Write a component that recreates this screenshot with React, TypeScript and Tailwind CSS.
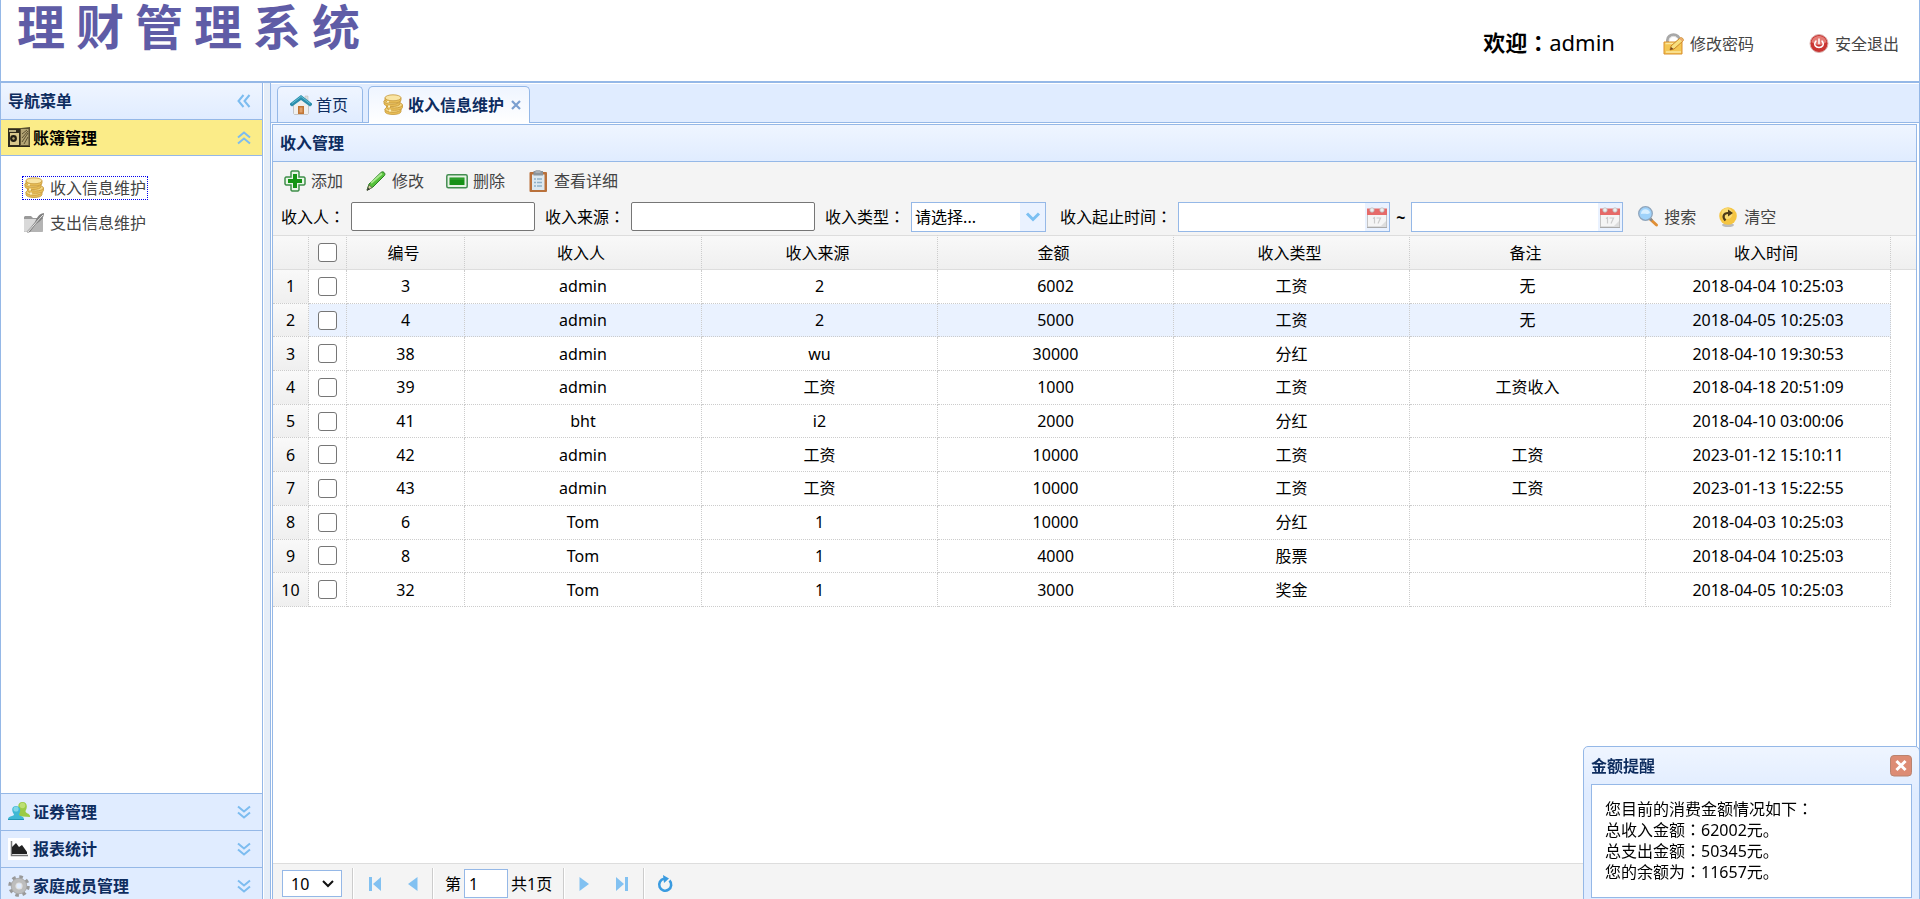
import { useState, type ReactNode } from 'react';

type Income = {
  id: number;
  person: string;
  source: string;
  amount: number;
  type: string;
  remark: string;
  time: string;
};

const incomes: Income[] = [
  { id: 3, person: 'admin', source: '2', amount: 6002, type: '工资', remark: '无', time: '2018-04-04 10:25:03' },
  { id: 4, person: 'admin', source: '2', amount: 5000, type: '工资', remark: '无', time: '2018-04-05 10:25:03' },
  { id: 38, person: 'admin', source: 'wu', amount: 30000, type: '分红', remark: '', time: '2018-04-10 19:30:53' },
  { id: 39, person: 'admin', source: '工资', amount: 1000, type: '工资', remark: '工资收入', time: '2018-04-18 20:51:09' },
  { id: 41, person: 'bht', source: 'i2', amount: 2000, type: '分红', remark: '', time: '2018-04-10 03:00:06' },
  { id: 42, person: 'admin', source: '工资', amount: 10000, type: '工资', remark: '工资', time: '2023-01-12 15:10:11' },
  { id: 43, person: 'admin', source: '工资', amount: 10000, type: '工资', remark: '工资', time: '2023-01-13 15:22:55' },
  { id: 6, person: 'Tom', source: '1', amount: 10000, type: '分红', remark: '', time: '2018-04-03 10:25:03' },
  { id: 8, person: 'Tom', source: '1', amount: 4000, type: '股票', remark: '', time: '2018-04-04 10:25:03' },
  { id: 32, person: 'Tom', source: '1', amount: 3000, type: '奖金', remark: '', time: '2018-04-05 10:25:03' },
];

const columns = ['编号', '收入人', '收入来源', '金额', '收入类型', '备注', '收入时间'];

function Icon({ children, className = '' }: { children: ReactNode; className?: string }) {
  return (
    <svg viewBox="0 0 22 22" className={`size-[22px] shrink-0 ${className}`} fill="none" aria-hidden="true">
      {children}
    </svg>
  );
}

const Coins = () => (
  <Icon>
    <g fill="#e9bf58" stroke="#c7983a" strokeWidth=".8">
      <path d="M3 15v2.500c0 4 16 4 16 0V15z" />
      <ellipse cx="11" cy="15.300" rx="8" ry="3" fill="#f3d683" />
      <path d="M4.500 11v2.300c0 4 16 4 16 0V11z" />
      <ellipse cx="12.500" cy="11" rx="8" ry="3" fill="#f3d683" />
      <path d="M2 7v2.500c0 4 16 4 16 0V7z" />
      <ellipse cx="10" cy="7.300" rx="8" ry="3" fill="#f3d683" />
      <path d="M3 3.800V6c0 4 16 4 16 0V3.800z" />
      <ellipse cx="11" cy="3.800" rx="8" ry="3" fill="#f9e5a4" />
    </g>
    <path d="M6 7v1.500M8 15.500v2M7 11.500v2" stroke="#fbf0c0" strokeWidth="2" />
  </Icon>
);

const Folder = () => (
  <Icon>
    <path d="M2 4h6l2 2h10v13l-1 1H2l-1-1V5z" fill="#9a9a9a" />
    <path d="M1 7h19v12l-1 1H2l-1-1z" fill="#b4b4b4" />
    <path d="M1 7h14L3 20l-2-1z" fill="#d9d9d9" />
    <path d="M21 1c-6 1-7 5-9 9l-8 11 3-1 6-8c3-2 8-5 8-11z" fill="#808080" />
    <path d="M20 3c-5 5-9 10-15 17" stroke="#e8e8e8" strokeWidth="1" />
  </Icon>
);

const House = () => (
  <Icon>
    <path d="M15 2h3v6h-3z" fill="#ddd" stroke="#bbb" strokeWidth=".5" />
    <path d="M3.500 10 11 4l7.500 6v9.500l-1 1h-13l-1-1z" fill="#f0efed" stroke="#bbb" strokeWidth=".8" />
    <path d="M8 12h6v8H8z" fill="#c07535" />
    <path d="M9.500 13.500h3v5h-3z" fill="#dfa069" />
    <path d="M0 9.500 11 1l11 8.500v1.500l-2 1.500-9-6.500-9 6.500L0 11z" fill="#2a8dac" />
    <path d="M2 9.500 11 2.500l9 7" stroke="#64bfd4" strokeWidth="1" />
  </Icon>
);

const Safe = () => (
  <Icon>
    <path d="M0 1h13l9-1v20H0z" fill="#5b5030" />
    <path d="M0 2h12v17H0z" fill="#2f2a1b" />
    <path d="M2 6h9v12H2z" fill="#d9c88b" />
    <circle cx="5.500" cy="11.500" r="3.400" fill="#211d12" />
    <circle cx="5.500" cy="11.500" r="1.200" fill="#b8a76d" />
    <path d="M1 4h7" stroke="#e9dca4" strokeWidth="1.500" />
    <path d="M13 2h7.500v16H13z" fill="#b3a474" />
    <path d="m14 7 5-4m-5 8 6-7m-6 11 6-9m-4 11 4-7" stroke="#5b5030" />
    <path d="M0 19.500h22" stroke="#2f2a1b" />
  </Icon>
);

const Users = () => (
  <Icon>
    <path d="M8 15c0-4 4-3 4-5-3-4-2-9 2.500-9S20 6 17.500 10c0 3 5 2 4.500 6z" fill="#9bcb45" />
    <circle cx="14.500" cy="4.500" r="2.800" fill="#bddf72" />
    <path d="M0 18.500c0-4 6-3 6-5C3 9 4 5 8 5s5.500 4 3 8.500c0 2 5 1 5 5z" fill="#3fb8d4" />
    <circle cx="8" cy="8" r="2.600" fill="#80d7e8" />
    <path d="M0 18.500h16" stroke="#2397b4" />
  </Icon>
);

const Chart = () => (
  <Icon>
    <path d="M0 0h22v22H0z" fill="#fff" />
    <path d="M3.500 3v14.500H20" stroke="#777" strokeWidth="1.500" />
    <path d="M4 16V9l4-4 3 4 3-2 5 7v2z" fill="#222" />
  </Icon>
);

const Gear = () => (
  <Icon>
    <circle cx="11" cy="11" r="9" stroke="#999" strokeWidth="3.500" strokeDasharray="3.500 3.570" />
    <circle cx="11" cy="11" r="5.500" stroke="#bdbdbd" strokeWidth="5" />
    <circle cx="11" cy="11" r="7.800" stroke="#a2a2a2" strokeWidth=".7" />
    <circle cx="11" cy="11" r="3" stroke="#e3e3e3" strokeWidth="1.200" />
  </Icon>
);

const Lock = () => (
  <Icon>
    <path d="M4.500 11V7c0-7 12-7 12 0v3" stroke="#a8a8a8" strokeWidth="3" />
    <path d="M6 8c0-5 6-6 8-3" stroke="#ddd" />
    <path d="M1 9h18v12H1z" fill="#f3c653" stroke="#d98f2c" />
    <path d="M2.500 10.500h15M3 19h15" stroke="#fbe7a0" strokeWidth="1.500" />
    <path d="m7 17 1-4 9-8c2-1 4 1 3 3l-9 8z" fill="#f7df7f" stroke="#ca8422" />
    <path d="m7 17 1-3 2.500 2z" fill="#74451c" />
    <path d="m17 5 3 3" stroke="#eaa96b" strokeWidth="2" />
  </Icon>
);

const Power = () => (
  <Icon>
    <circle cx="11" cy="10.500" r="9" fill="#c93532" stroke="#d9b3b1" />
    <path d="M3.500 9C5 1 17 1 18.500 9c-5 4-10 4-15 0z" fill="#e47a74" />
    <path d="M8 8c-3 4 0 6.500 3 6.500S17 12 14 8M11 6v4.500" stroke="#fff" strokeWidth="1.500" strokeLinecap="round" />
  </Icon>
);

const Plus = () => (
  <Icon>
    <path d="M8 1h6l1 1v5h5l1 1v6l-1 1h-5v5l-1 1H8l-1-1v-5H2l-1-1V8l1-1h5V2z" fill="#eaf6e8" stroke="#3f8f4a" strokeWidth="1.500" />
    <path d="M9 4h4v5h5v4h-5v5H9v-5H4V9h5z" fill="#149414" />
  </Icon>
);

const Pencil = () => (
  <Icon>
    <path d="m2 20 2-6L16 2.500c2-2 5 1 3.500 3L8 17z" fill="#55c13a" stroke="#2c7d25" />
    <path d="M6 13 17 3.500" stroke="#a9e78f" strokeWidth="2" />
    <path d="m2 20.500 2-5.500 3 2.500z" fill="#d9d2a8" stroke="#5c6b45" strokeWidth=".8" />
    <path d="m2 20.500 1-3 2 2z" fill="#333" />
  </Icon>
);

const Minus = () => (
  <Icon>
    <rect x=".8" y="4.800" width="20.400" height="13" rx="1.500" fill="#e6f2e4" stroke="#438d50" strokeWidth="1.500" />
    <path d="M3.500 7.500h15v7.500h-15z" fill="#169116" />
    <path d="M4 8h14v2H4z" fill="#2a9d2a" />
  </Icon>
);

const Clipboard = () => (
  <Icon>
    <rect x="2.500" y="2" width="17.500" height="20" rx="1" fill="#b9713b" />
    <path d="M5 4.500h12.500V20H5z" fill="#dce9f1" />
    <path d="M6.500 1H16v4.500H6.500z" fill="#8b949b" />
    <path d="M8.500 0h5v3h-5z" fill="#aab1b6" />
    <path d="M7 9h2m1 0h5m-8 3.500h2m1 0h5m-8 3.500h2m1 0h5" stroke="#8fb1c8" strokeWidth="1.300" />
  </Icon>
);

const Magnifier = () => (
  <Icon>
    <path d="m13 13 6.500 6" stroke="#e08f35" strokeWidth="3" strokeLinecap="round" />
    <path d="m13 12.500 2 2" stroke="#888" strokeWidth="2.500" />
    <circle cx="8.500" cy="7.500" r="6.800" fill="#9fd2fa" stroke="#8ea4bb" strokeWidth="1.300" />
    <path d="M4 8c0-6 8-6 9-1-3 2-5 0-9 1z" fill="#d8efff" />
  </Icon>
);

const Undo = () => (
  <Icon>
    <ellipse cx="11" cy="19" rx="6" ry="2" fill="#bbb" />
    <circle cx="11" cy="10" r="8.800" fill="#f5c542" />
    <circle cx="10" cy="7.500" r="5.500" fill="#fadb73" />
    <path d="M8.500 14.500c-3.500-3.500-2-7.500 2.500-7.500h1" stroke="#4d3a18" strokeWidth="2.200" />
    <path d="m11 3.500 5 3.500-5 3.500z" fill="#4d3a18" />
  </Icon>
);

const Calendar = () => (
  <Icon>
    <rect x="1.500" y="3.500" width="19" height="17.500" fill="#f5f5f5" stroke="#c4c4c4" />
    <path d="M1 2.500h20V9H1z" fill="#e66a68" />
    <circle cx="6" cy="4" r="2.200" fill="#eee" stroke="#bbb" strokeWidth=".8" />
    <circle cx="16" cy="4" r="2.200" fill="#eee" stroke="#bbb" strokeWidth=".8" />
    <path d="M7 12.500 8.500 11.500V17.500M10.500 12h4l-2.500 5.500" stroke="#cbcbcb" strokeWidth="1.200" />
    <path d="m15 20 5-5v5z" fill="#ddd" />
    <path d="M1 21.500h20" stroke="#aaa" />
  </Icon>
);

function Chevrons({ className = '' }: { className?: string }) {
  return (
    <svg viewBox="0 0 14 14" className={`size-[14px] shrink-0 ${className}`} fill="none" aria-hidden="true">
      <path d="m1 1.500 6 5 6-5M1 7.500l6 5 6-5" stroke="#7cbcf0" strokeWidth="2" />
    </svg>
  );
}

// The Traditional face keeps the full-width colon in the middle of its box.
const Colon = () => <span className="font-['Noto_Sans_CJK_TC',sans-serif] leading-none">：</span>;

function AccordionHead({ icon, title }: { icon: ReactNode; title: string }) {
  return (
    <button
      type="button"
      className="flex h-[37px] shrink-0 items-center gap-[3px] border-t border-[#95b8e7] bg-[#e0ecff] pr-[11px] pl-[7px] font-bold text-[#0e2d5f]"
    >
      {icon}
      {title}
      <Chevrons className="ml-auto" />
    </button>
  );
}

function ToolButton({ icon, children }: { icon: ReactNode; children: ReactNode }) {
  return (
    <button type="button" className="flex shrink-0 items-center gap-[5px] whitespace-nowrap text-[#444]">
      {icon}
      {children}
    </button>
  );
}

function DateBox({ id, label }: { id: string; label: string }) {
  return (
    <div className="flex h-[30px] w-[212px] items-center border border-[#95b8e7] bg-white">
      <input id={id} aria-label={label} className="h-full min-w-0 flex-1 px-1 outline-none" />
      <button type="button" aria-label="选择日期" className="flex h-full w-6 items-center justify-center bg-[#eaf2ff]">
        <Calendar />
      </button>
    </div>
  );
}

function Sidebar() {
  return (
    <nav className="flex h-[calc(100%+5px)] w-[262px] shrink-0 flex-col border-r border-[#95b8e7] bg-white">
      <div className="flex h-[37px] shrink-0 items-center justify-between border-b border-[#95b8e7] bg-linear-to-b from-[#eff5ff] to-[#e0ecff] pr-[11px] pl-[7px] font-bold text-[#0e2d5f]">
        导航菜单
        <button type="button" aria-label="收起菜单">
          <Chevrons className="rotate-90" />
        </button>
      </div>
      <button
        type="button"
        className="flex h-9 shrink-0 items-center gap-[3px] border-b border-[#95b8e7] bg-[#fbec88] pr-[11px] pl-[7px] font-bold"
      >
        <Safe />
        账簿管理
        <Chevrons className="ml-auto rotate-180" />
      </button>
      <ul className="flex flex-1 flex-col items-start gap-[11px] px-[21px] py-5 text-[#444]">
        <li>
          <a href="#income" className="flex h-6 items-center gap-[5px] border border-dotted border-[#0000ee] pr-px">
            <Coins />
            收入信息维护
          </a>
        </li>
        <li>
          <a href="#expense" className="flex h-6 items-center gap-[5px] border border-transparent">
            <Folder />
            支出信息维护
          </a>
        </li>
      </ul>
      <AccordionHead icon={<Users />} title="证券管理" />
      <AccordionHead icon={<Chart />} title="报表统计" />
      <AccordionHead icon={<Gear />} title="家庭成员管理" />
    </nav>
  );
}

function Filters() {
  return (
    <div className="flex h-[37px] items-center whitespace-nowrap pl-2">
      <label htmlFor="person">收入人<Colon /></label>
      <input id="person" className="mr-2.5 ml-1.5 h-[29px] w-[184px] rounded-xs border border-[#767676] bg-white px-1" />
      <label htmlFor="source">收入来源<Colon /></label>
      <input id="source" className="mr-2.5 ml-1.5 h-[29px] w-[184px] rounded-xs border border-[#767676] bg-white px-1" />
      <label htmlFor="type">收入类型<Colon /></label>
      <div className="relative mr-3.5 ml-1.5">
        <select id="type" className="h-[30px] w-[135px] appearance-none border border-[#95b8e7] bg-white pl-[3px]">
          <option>请选择...</option>
          <option>工资</option>
          <option>分红</option>
          <option>股票</option>
          <option>奖金</option>
        </select>
        <span className="pointer-events-none absolute inset-y-px right-px flex w-[25px] items-center justify-center bg-[#eaf2ff]">
          <svg viewBox="0 0 16 12" className="h-3 w-4" fill="none" aria-hidden="true">
            <path d="m2 2.500 6 6 6-6" stroke="#7cc0f2" strokeWidth="3" />
          </svg>
        </span>
      </div>
      <label htmlFor="start">收入起止时间<Colon /></label>
      <div className="ml-1.5 flex items-center gap-1.5">
        <DateBox id="start" label="开始时间" />
        <span className="font-bold">~</span>
        <DateBox id="end" label="结束时间" />
      </div>
      <div className="ml-3.5 flex gap-[21px]">
        <ToolButton icon={<Magnifier />}>搜索</ToolButton>
        <ToolButton icon={<Undo />}>清空</ToolButton>
      </div>
    </div>
  );
}

function IncomeTable() {
  const [checked, setChecked] = useState<number[]>([]);

  const toggle = (id: number) =>
    setChecked(checked.includes(id) ? checked.filter((c) => c !== id) : [...checked, id]);

  const boxClass =
    'block mx-auto size-[19px] appearance-none rounded-[3px] border border-[#767676] bg-white checked:bg-blue-600';

  return (
    <table className="h-[372px] w-full table-fixed border-separate border-spacing-0 text-center">
      <colgroup>
        <col className="w-9" />
        <col className="w-[38px]" />
        <col className="w-[118px]" />
        <col className="w-[237px]" />
        <col className="w-[236px]" />
        <col className="w-[236px]" />
        <col className="w-[236px]" />
        <col className="w-[236px]" />
        <col className="w-[245px]" />
        <col className="w-[25px]" />
      </colgroup>
      <thead>
        <tr className="h-[35px] bg-linear-to-b from-[#f9f9f9] to-[#efefef]">
          <th className="border-y border-r border-[#ddd] border-r-[#ccc] [border-right-style:dotted]" />
          <th className="border-y border-r border-[#ddd] border-r-[#ccc] pr-px [border-right-style:dotted]">
            <input
              type="checkbox"
              aria-label="全选"
              className={boxClass}
              checked={checked.length === incomes.length}
              onChange={() => setChecked(checked.length === incomes.length ? [] : incomes.map((i) => i.id))}
            />
          </th>
          {columns.map((name) => (
            <th
              key={name}
              className="border-y border-r border-[#ddd] border-r-[#ccc] pr-1 font-normal [border-right-style:dotted]"
            >
              {name}
            </th>
          ))}
          <th className="border-y border-[#ddd]" />
        </tr>
      </thead>
      <tbody>
        {incomes.map((row, i) => (
          <tr key={row.id} className={i === 1 ? '[&>td:not(:first-child):not(:last-child)]:bg-[#eaf2ff]' : ''}>
            <td className="border-r border-b border-dotted border-[#ccc] bg-linear-to-b from-[#f9f9f9] to-[#efefef]">
              {i + 1}
            </td>
            <td className="border-r border-b border-dotted border-[#ccc] pr-px">
              <input
                type="checkbox"
                aria-label={`选择 ${row.id}`}
                className={boxClass}
                checked={checked.includes(row.id)}
                onChange={() => toggle(row.id)}
              />
            </td>
            {[row.id, row.person, row.source, row.amount, row.type, row.remark, row.time].map((value, c) => (
              <td key={c} className="border-r border-b border-dotted border-[#ccc]">
                {value}
              </td>
            ))}
            <td />
          </tr>
        ))}
      </tbody>
    </table>
  );
}

function Separator() {
  return <span className="h-8 w-0.5 border-r border-l border-r-white border-l-[#ccc]" />;
}

function Pager() {
  return (
    <div className="flex h-9 shrink-0 items-center border-t border-[#ddd] bg-[#f4f4f4] pt-1 pl-[9px]">
      <div className="relative mr-2.5">
        <select
          aria-label="每页条数"
          className="h-[27px] w-[60px] appearance-none border border-[#95b8e7] bg-white pl-2"
        >
          <option>10</option>
          <option>20</option>
        </select>
        <svg viewBox="0 0 12 8" className="pointer-events-none absolute top-2.5 right-2 h-2 w-3" fill="none" aria-hidden="true">
          <path d="m1 1 5 5 5-5" stroke="#111" strokeWidth="2" />
        </svg>
      </div>
      <Separator />
      <div className="flex gap-[26px] px-3.5">
        <button type="button" aria-label="首页">
          <svg viewBox="0 0 14 16" className="h-4 w-3.5" fill="#82c1f1" aria-hidden="true">
            <path d="M1 1h3v14H1zM13 1v14L5 8z" />
          </svg>
        </button>
        <button type="button" aria-label="上一页">
          <svg viewBox="0 0 10 16" className="h-4 w-2.5" fill="#82c1f1" aria-hidden="true">
            <path d="M9.500 1v14L0 8z" />
          </svg>
        </button>
      </div>
      <Separator />
      <div className="flex items-center gap-[3px] px-[11px]">
        <label htmlFor="page">第</label>
        <input id="page" defaultValue="1" className="h-[29px] w-11 border border-[#95b8e7] bg-white px-1" />
        <span>共1页</span>
      </div>
      <Separator />
      <div className="flex gap-[26px] px-3.5">
        <button type="button" aria-label="下一页">
          <svg viewBox="0 0 10 16" className="h-4 w-2.5" fill="#82c1f1" aria-hidden="true">
            <path d="M.5 1v14L10 8z" />
          </svg>
        </button>
        <button type="button" aria-label="末页">
          <svg viewBox="0 0 14 16" className="h-4 w-3.5" fill="#82c1f1" aria-hidden="true">
            <path d="M10 1h3v14h-3zM1 1v14l8-7z" />
          </svg>
        </button>
      </div>
      <Separator />
      <button type="button" aria-label="刷新" className="ml-3">
        <svg viewBox="0 0 16 18" className="h-[18px] w-4" fill="none" aria-hidden="true">
          <path d="M12.500 5.500A6 6 0 1 1 7 3.800" stroke="#3a9be0" strokeWidth="2.600" />
          <path d="m6 0 6 3.500L7 8z" fill="#3a9be0" />
        </svg>
      </button>
    </div>
  );
}

function Reminder({ onClose }: { onClose: () => void }) {
  return (
    <section className="fixed right-0 -bottom-1.5 w-[337px] rounded-[5px] border border-[#95b8e7] bg-linear-to-b from-[#eff5ff] to-[#e0ecff] to-30% px-[7px] pb-1.5">
      <header className="flex h-[37px] items-center justify-between font-bold text-[#0e2d5f]">
        金额提醒
        <button type="button" aria-label="关闭" onClick={onClose}>
          <Icon>
            <rect x=".5" y=".5" width="21" height="20.500" rx="3.500" fill="#dd8c74" stroke="#b9836f" />
            <path d="m7.500 7 7 7m0-7-7 7" stroke="#fff" strokeWidth="3" strokeLinecap="square" />
          </Icon>
        </button>
      </header>
      <div className="border border-[#95b8e7] bg-white px-[13px] py-3.5 leading-[21px]">
        <p>您目前的消费金额情况如下<Colon /></p>
        <p>总收入金额<Colon />62002元。</p>
        <p>总支出金额<Colon />50345元。</p>
        <p>您的余额为<Colon />11657元。</p>
      </div>
    </section>
  );
}

export default function App() {
  const [showReminder, setShowReminder] = useState(true);

  return (
    <div className="flex h-screen flex-col overflow-hidden border-x border-[#95b8e7] bg-white font-['Noto_Sans','Noto_Sans_CJK_SC',sans-serif] text-base leading-[22px] text-black">
      <header className="flex h-[83px] shrink-0 items-start justify-between border-b-2 border-[#95b8e7] pr-5 pl-4">
        <h1 className="flex gap-[11px] text-5xl leading-[54px] font-bold text-[#5f5ca6]">
          {[...'理财管理系统'].map((char, i) => (
            <span key={i}>{char}</span>
          ))}
        </h1>
        <div className="flex items-center pt-7">
          <span className="mr-12 pb-1 text-[22px] leading-7">
            <b>欢迎<Colon /></b>
            admin
          </span>
          <a href="#password" className="mr-[54px] flex items-center gap-[5px] text-[#444]">
            <Lock />
            修改密码
          </a>
          <a href="#logout" className="flex items-center gap-[5px] text-[#444]">
            <Power />
            安全退出
          </a>
        </div>
      </header>

      <div className="flex min-h-0 flex-1">
        <Sidebar />
        <div className="w-[7px] shrink-0 border-l border-white bg-[#e6eef8]" />

        <main className="flex min-w-0 flex-1 flex-col border-l border-[#95b8e7]">
          <div className="flex h-10 shrink-0 items-end gap-[5px] border-t border-b border-t-white border-b-[#95b8e7] bg-[#e0ecff] pl-1.5">
            <button
              type="button"
              className="flex h-9 items-center gap-1 rounded-t-[5px] border border-b-0 border-[#95b8e7] bg-linear-to-b from-[#eff5ff] to-[#e0ecff] px-3 pr-3.5 text-[#0e2d5f]"
            >
              <House />
              首页
            </button>
            <div className="-mb-px flex h-[37px] items-center rounded-t-[5px] border border-b-0 border-[#95b8e7] bg-linear-to-b from-[#eff5ff] to-white pr-2 pl-[13px]">
              <button type="button" className="flex items-center gap-1 font-bold text-[#0e2d5f]">
                <Coins />
                收入信息维护
              </button>
              <button type="button" aria-label="关闭标签" className="ml-[7px]">
                <svg viewBox="0 0 10 10" className="size-2.5" fill="none" aria-hidden="true">
                  <path d="m1 1 8 8m0-8-8 8" stroke="#7a9fd0" strokeWidth="2.200" />
                </svg>
              </button>
            </div>
          </div>

          <div className="mt-px mr-0.5 ml-px flex min-h-0 flex-1 flex-col border border-b-0 border-[#95b8e7]">
            <h2 className="flex h-[37px] shrink-0 items-center border-b border-[#95b8e7] bg-linear-to-b from-[#eff5ff] to-[#e0ecff] pl-[7px] font-bold text-[#0e2d5f]">
              收入管理
            </h2>
            <div className="shrink-0 bg-[#f4f4f4]">
              <div className="flex h-9 items-center gap-[22px] pt-0.5 pl-[11px]">
                <ToolButton icon={<Plus />}>添加</ToolButton>
                <ToolButton icon={<Pencil />}>修改</ToolButton>
                <ToolButton icon={<Minus />}>删除</ToolButton>
                <ToolButton icon={<Clipboard />}>查看详细</ToolButton>
              </div>
              <Filters />
            </div>
            <div className="min-h-0 flex-1 overflow-hidden">
              <IncomeTable />
            </div>
            <Pager />
          </div>
        </main>
      </div>

      {showReminder && <Reminder onClose={() => setShowReminder(false)} />}
    </div>
  );
}
